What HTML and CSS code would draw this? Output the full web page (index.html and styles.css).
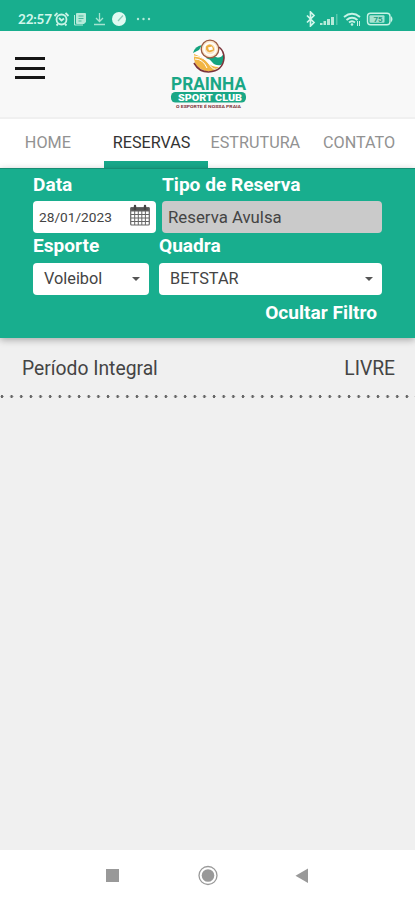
FILE: index.html
```html
<!DOCTYPE html>
<html lang="pt-BR">
<head>
    <meta charset="UTF-8">
    <meta name="viewport" content="width=device-width, initial-scale=1.0">
    <title>Prainha Sport Club</title>
    <link rel="stylesheet" href="styles.css">
</head>
<body>
    <div class="status-bar">
        <span class="clock">22:57</span>
        <svg class="status-left" width="102" height="16" viewBox="0 0 102 16">
            <g fill="none" stroke="#c8f3e6" stroke-width="1.8">
                <circle cx="8.5" cy="8.5" r="5"/>
                <path d="M6 7l2.500 2.500L11 7.500M1.500 5l3-3M15.500 5l-3-3M5 13l-1.500 1.500M12 13l1.500 1.500"/>
            </g>
            <path fill="#b5ead9" d="M24 2h8q1 0 1 1v8l-2 2h-7q-1 0-1-1V3q0-1 1-1z"/>
            <path fill="none" stroke="#b5ead9" d="M21.500 4v10H30"/>
            <path fill="none" stroke="#46b99b" d="M25.500 5h5M25.500 7.500h5M25.500 10h3"/>
            <path fill="none" stroke="#a5e4d1" stroke-width="1.300" d="M46.500 2v8M43 7l3.500 3.500L50 7M41 13.500h11"/>
            <circle cx="66" cy="8" r="7" fill="#e0faf2"/>
            <path stroke="#8bcbb9" stroke-width="1.200" d="M65 10l5-5.500"/>
            <g fill="#b5ead9"><circle cx="85" cy="8" r="1.200"/><circle cx="90.500" cy="8" r="1.200"/><circle cx="96" cy="8" r="1.200"/></g>
        </svg>
        <svg class="status-right" width="92" height="16" viewBox="0 0 92 16">
            <path fill="none" stroke="#d2f7ec" stroke-width="1.700" d="M3 4.500l7 7L6.500 15V1L10 4.500l-7 7"/>
            <g fill="#b5ead9">
                <rect x="16" y="12" width="2.500" height="2"/>
                <rect x="19.500" y="10" width="2.500" height="4"/>
                <rect x="23" y="8" width="3" height="6"/>
                <rect x="27" y="6" width="3" height="8"/>
                <rect x="32" y="3" width="1.500" height="11" opacity=".4"/>
            </g>
            <g fill="none" stroke="#c8f3e6" stroke-width="1.900">
                <path d="M40 6q8-6.500 16 0M42.500 9q5.500-4.500 11 0M45 11.500q3-2.500 6 0"/>
            </g>
            <circle cx="48" cy="13.500" r="1.300" fill="#c8f3e6"/>
            <path stroke="#c8f3e6" d="M53.500 10v5M55.500 10v5"/>
            <rect x="63.500" y="2.300" width="22.500" height="11.500" rx="3" fill="none" stroke="#c8f3e6" stroke-width="1.400"/>
            <path fill="#c8f3e6" d="M87 5q3 3.200 0 6.500z"/>
            <rect x="65.500" y="4.300" width="15" height="7.500" rx="1" fill="#a5e4d1"/>
            <text class="battery-level" x="74" y="11">75</text>
        </svg>
    </div>

    <header class="header">
        <button class="menu-btn" aria-label="Menu"><span></span><span></span><span></span></button>
        <svg class="logo" width="80" height="74" viewBox="0 0 80 74">
            <circle cx="40" cy="19" r="14.500" fill="#fff"/>
            <path fill="#f2b544" d="M25 15q-1 10 6 14.500 5 3.500 13 2.500l6-4q-8 0-12-5T25 15z"/>
            <path fill="none" stroke="#fff" d="M26 20q8 0 12 9M25 17q11 1 15 8t10 5"/>
            <path fill="#15a37f" d="M37 20q5-4 10-2t8-4q1 8-3 12-6 1-9-3t-6-3z"/>
            <path fill="none" stroke="#7b343a" stroke-width="1.600" d="M25 24q5 9 14.500 9Q54 32 55 19q0-7-5-11"/>
            <path fill="#15a37f" d="M24 14q2-7 9-8l-3 5z"/>
            <circle cx="41" cy="10" r="8.800" fill="#fbe7ca" stroke="#9a5b43" stroke-width="1.300"/>
            <circle cx="41" cy="10" r="6" fill="none" stroke="#fff" stroke-width="1.500"/>
            <path fill="#edae3f" d="M37 7.500q4-4 7 0t-1 5q-4 2-6-2z"/>
            <path fill="#fff" d="M39 8.500l4-1 1 3-4 1z"/>
            <text class="logo-name" x="2" y="50.500" textLength="75" lengthAdjust="spacingAndGlyphs">PRAINHA</text>
            <rect x="2" y="53" width="75" height="10.500" rx="4.500" fill="#1aa786"/>
            <text class="logo-club" x="9" y="61.800" textLength="64" lengthAdjust="spacingAndGlyphs">SPORT CLUB</text>
            <text class="logo-motto" x="7" y="69" textLength="65" lengthAdjust="spacingAndGlyphs">O ESPORTE É NOSSA PRAIA</text>
        </svg>
    </header>

    <nav class="tabs">
        <a class="tab">HOME</a>
        <a class="tab active">RESERVAS</a>
        <a class="tab">ESTRUTURA</a>
        <a class="tab">CONTATO</a>
    </nav>

    <section class="filter">
        <div class="filter-row">
            <div class="field field-date">
                <label>Data</label>
                <div class="control date">
                    <span>28/01/2023</span>
                    <svg width="20" height="22" viewBox="0 0 20 22" fill="none" stroke="#666">
                        <rect x=".7" y="3.500" width="18.600" height="17.500" rx="1" stroke-width="1.200"/>
                        <path fill="#555" d="M1 3.500h18V7H1z"/>
                        <path d="M4.700 7v14M8.300 7v14M11.800 7v14M15.400 7v14M1 10.500h18M1 14h18M1 17.500h18"/>
                        <path stroke="#444" stroke-width="2.400" stroke-linecap="round" d="M5 2v3M15 2v3"/>
                    </svg>
                </div>
            </div>
            <div class="field field-type">
                <label>Tipo de Reserva</label>
                <div class="control disabled">Reserva Avulsa</div>
            </div>
        </div>
        <div class="filter-row second">
            <div class="field field-sport">
                <label>Esporte</label>
                <div class="control select">Voleibol</div>
            </div>
            <div class="field field-court">
                <label>Quadra</label>
                <div class="control select">BETSTAR</div>
            </div>
        </div>
        <a class="toggle-filter">Ocultar Filtro</a>
    </section>

    <main class="schedule">
        <div class="slot">
            <span class="period">Período Integral</span>
            <span class="state">LIVRE</span>
        </div>
    </main>

    <footer class="android-nav">
        <svg width="415" height="50" viewBox="0 0 415 50">
            <rect x="106" y="19" width="13" height="13" fill="#999"/>
            <circle cx="208" cy="25.500" r="9" fill="none" stroke="#999" stroke-width="1.300"/>
            <circle cx="208" cy="25.500" r="6.300" fill="#999"/>
            <path fill="#999" d="M308 18.500v14.500l-12.500-7.200z"/>
        </svg>
    </footer>
</body>
</html>
```
FILE: styles.css
```css
* {
    box-sizing: border-box;
}
body {
    margin: 0;
    height: 900px;
    display: flex;
    flex-direction: column;
    overflow: hidden;
    font-family: Roboto, sans-serif;
    background: #f0f0f0;
    color: #444;
}
.status-bar {
    height: 31px;
    padding: 7px 19px 0 18px;
    display: flex;
    align-items: center;
    background: #18ae8e;
}
.clock {
    width: 35px;
    font-family: Lato, sans-serif;
    font-size: 13.5px;
    font-weight: bold;
    letter-spacing: -0.2px;
    color: #d2f7ec;
}
.status-right {
    margin-left: auto;
}
.battery-level {
    font-size: 8px;
    font-weight: bold;
    text-anchor: middle;
    fill: #249b7f;
}
.header {
    height: 88px;
    padding: 8px 15px 0 15px;
    display: flex;
    align-items: flex-start;
    background: #f8f8f8;
    border-bottom: 2px solid #f0f0f0;
}
.menu-btn {
    width: 30px;
    height: 22px;
    margin: 18px 124px 0 0;
    padding: 0;
    display: flex;
    flex-direction: column;
    justify-content: space-between;
    background: none;
    border: none;
}
.menu-btn span {
    height: 3px;
    background: #161616;
}
.logo {
    overflow: visible;
}
.logo-name {
    font-family: Roboto, sans-serif;
    font-size: 19px;
    font-weight: bold;
    fill: #1aa786;
}
.logo-club {
    font-family: Roboto, sans-serif;
    font-size: 9.5px;
    font-weight: 900;
    fill: #fff;
}
.logo-motto {
    font-size: 4px;
    font-weight: bold;
    fill: #7b343a;
}
.tabs {
    height: 49px;
    display: flex;
    background: #fff;
}
.tab {
    flex: 1 1 0;
    padding: 0 8px 0 0;
    border-bottom: 7px solid transparent;
    text-align: center;
    white-space: nowrap;
    font-size: 16.2px;
    line-height: 47px;
    color: #929292;
}
.tab.active {
    color: #333;
    border-bottom-color: #18a88a;
}
.filter {
    height: 170px;
    padding: 5px 33px 0 33px;
    background: #18ae8e;
    border-top: 1px solid #168c73;
    box-shadow: 0 2px 7px rgba(0, 0, 0, 0.3);
}
.filter-row {
    display: flex;
    gap: 6px;
}
.filter-row.second {
    gap: 10px;
}
.filter label {
    display: block;
    height: 27px;
    line-height: 22px;
    font-size: 19.1px;
    font-weight: bold;
    color: #fff;
}
.second label {
    height: 29.5px;
    line-height: 26px;
}
.control {
    height: 32px;
    padding: 0 6px;
    display: flex;
    align-items: center;
    border-radius: 4px;
    background: #fff;
    font-size: 16.8px;
}
.field-date {
    width: 123px;
}
.field-type,
.field-court {
    flex: 1;
}
.field-sport {
    width: 116px;
}
.date {
    padding-right: 6px;
    justify-content: space-between;
    font-size: 13.7px;
}
.date svg {
    margin-top: -5px;
}
.disabled {
    background: #cacaca;
}
.select {
    padding: 0 9px 0 11px;
    justify-content: space-between;
    font-size: 16.3px;
}
.select::after {
    content: "";
    border: 4.5px solid transparent;
    border-top-color: #555;
    border-bottom: none;
}
.toggle-filter {
    display: block;
    margin-top: 7px;
    padding-right: 5px;
    text-align: right;
    font-size: 19.1px;
    font-weight: bold;
    line-height: 22px;
    color: #fff;
}
.schedule {
    flex: 1;
}
.slot {
    height: 60px;
    padding: 0 20px 0 22px;
    display: flex;
    justify-content: space-between;
    line-height: 61px;
    font-size: 19.3px;
    background: radial-gradient(circle at 2px 1.5px, #666 1.2px, transparent 1.7px) 0 100% / 9.65px 3px repeat-x;
}
.android-nav {
    height: 50px;
    background: #fff;
}
```
